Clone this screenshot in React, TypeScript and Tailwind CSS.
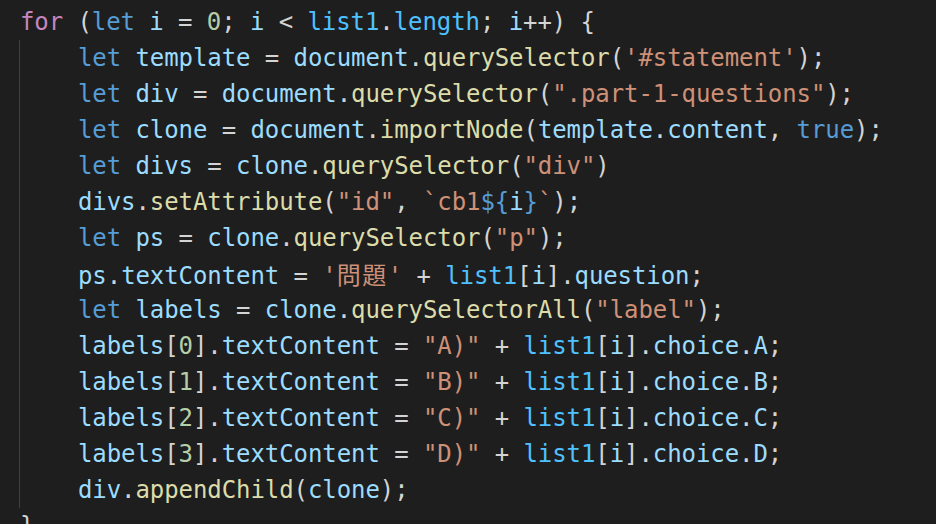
type Tok = [string, string];

const K = 'text-[#569cd6]';
const C = 'text-[#c586c0]';
const V = 'text-[#9cdcfe]';
const F = 'text-[#dcdcaa]';
const S = 'text-[#ce9178]';
const N = 'text-[#b5cea8]';
const L = 'text-[#4fc1ff]';
const P = 'text-[#d4d4d4]';

const labelLine = (n: string, ch: string): Tok[] => [
  [V, 'labels'], [P, '['], [N, n], [P, '].'], [V, 'textContent'], [P, ' = '],
  [S, `"${ch})"`], [P, ' + '], [L, 'list1'], [P, '['], [V, 'i'], [P, '].'],
  [V, 'choice'], [P, '.'], [V, ch], [P, ';'],
];

const body: Tok[][] = [
  [[K, 'let'], [P, ' '], [V, 'template'], [P, ' = '], [V, 'document'], [P, '.'], [F, 'querySelector'], [P, '('], [S, "'#statement'"], [P, ');']],
  [[K, 'let'], [P, ' '], [V, 'div'], [P, ' = '], [V, 'document'], [P, '.'], [F, 'querySelector'], [P, '('], [S, '".part-1-questions"'], [P, ');']],
  [[K, 'let'], [P, ' '], [V, 'clone'], [P, ' = '], [V, 'document'], [P, '.'], [F, 'importNode'], [P, '('], [V, 'template'], [P, '.'], [V, 'content'], [P, ', '], [K, 'true'], [P, ');']],
  [[K, 'let'], [P, ' '], [V, 'divs'], [P, ' = '], [V, 'clone'], [P, '.'], [F, 'querySelector'], [P, '('], [S, '"div"'], [P, ')']],
  [[V, 'divs'], [P, '.'], [F, 'setAttribute'], [P, '('], [S, '"id"'], [P, ', '], [S, '`cb1'], [K, '${'], [V, 'i'], [K, '}'], [S, '`'], [P, ');']],
  [[K, 'let'], [P, ' '], [V, 'ps'], [P, ' = '], [V, 'clone'], [P, '.'], [F, 'querySelector'], [P, '('], [S, '"p"'], [P, ');']],
  [[V, 'ps'], [P, '.'], [V, 'textContent'], [P, ' = '], [S, "'"], ['cjk', '問題'], [S, "'"], [P, ' + '], [L, 'list1'], [P, '['], [V, 'i'], [P, '].'], [V, 'question'], [P, ';']],
  [[K, 'let'], [P, ' '], [V, 'labels'], [P, ' = '], [V, 'clone'], [P, '.'], [F, 'querySelectorAll'], [P, '('], [S, '"label"'], [P, ');']],
  labelLine('0', 'A'),
  labelLine('1', 'B'),
  labelLine('2', 'C'),
  labelLine('3', 'D'),
  [[V, 'div'], [P, '.'], [F, 'appendChild'], [P, '('], [V, 'clone'], [P, ');']],
];

function Line({ toks }: { toks: Tok[] }) {
  return (
    <div className="h-[36px] whitespace-pre">
      {toks.map(([cls, text], i) =>
        cls === 'cjk' ? (
          <span
            key={i}
            className="inline-block w-[51px] text-[#ce9178] tracking-[1.5px] font-['Noto_Sans_CJK_JP',sans-serif]"
          >
            {text}
          </span>
        ) : (
          <span key={i} className={cls}>
            {text}
          </span>
        )
      )}
    </div>
  );
}

export default function App() {
  return (
    <div className="w-[936px] h-[524px] overflow-hidden bg-[#1e1e1e] pt-[4px] pl-[20px] text-[24px] leading-[36px] tracking-[-0.08px] text-[#d4d4d4] font-['DejaVu_Sans_Mono','Noto_Sans_CJK_JP',monospace]">
      <Line
        toks={[
          [C, 'for'], [P, ' ('], [K, 'let'], [P, ' '], [V, 'i'], [P, ' = '], [N, '0'], [P, '; '],
          [V, 'i'], [P, ' < '], [L, 'list1'], [P, '.'], [L, 'length'], [P, '; '], [V, 'i'], [P, '++) {'],
        ]}
      />
      <div className="ml-[-1px] border-l border-[#404040] pl-[58px]">
        {body.map((toks, i) => (
          <Line key={i} toks={toks} />
        ))}
      </div>
      <Line toks={[[P, '}']]} />
    </div>
  );
}
